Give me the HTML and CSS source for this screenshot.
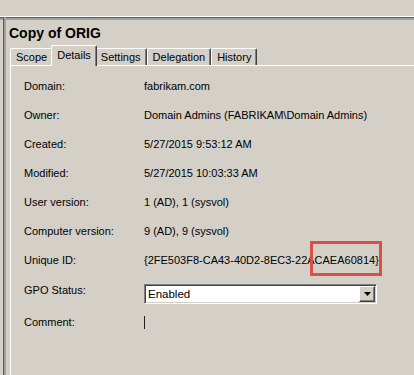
FILE: index.html
```html
<!DOCTYPE html>
<html lang="en">
<head>
    <meta charset="UTF-8">
    <title>Copy of ORIG</title>
    <link rel="stylesheet" href="styles.css">
</head>
<body>
    <div class="band"></div>
    <div class="window">
        <h1 class="title">Copy of ORIG</h1>

        <div class="tabs">
            <div class="tab">Scope</div>
            <div class="tab active">Details</div>
            <div class="tab">Settings</div>
            <div class="tab">Delegation</div>
            <div class="tab">History</div>
        </div>

        <div class="panel">
            <div class="row"><span class="label">Domain:</span><span class="value">fabrikam.com</span></div>
            <div class="row"><span class="label">Owner:</span><span class="value">Domain Admins (FABRIKAM\Domain Admins)</span></div>
            <div class="row"><span class="label">Created:</span><span class="value">5/27/2015 9:53:12 AM</span></div>
            <div class="row"><span class="label">Modified:</span><span class="value">5/27/2015 10:03:33 AM</span></div>
            <div class="row"><span class="label">User version:</span><span class="value">1 (AD), 1 (sysvol)</span></div>
            <div class="row"><span class="label">Computer version:</span><span class="value">9 (AD), 9 (sysvol)</span></div>
            <div class="row"><span class="label">Unique ID:</span><span class="value">{2FE503F8-CA43-40D2-8EC3-22ACAEA60814}</span></div>

            <div class="row status">
                <span class="label">GPO Status:</span>
                <div class="select">
                    <span class="select-text">Enabled</span>
                    <span class="select-btn">
                        <svg width="7" height="4" viewBox="0 0 7 4"><path d="M0 0h7L3.5 4z" fill="#000"/></svg>
                    </span>
                </div>
            </div>

            <div class="row comment">
                <span class="label">Comment:</span>
                <span class="caret"></span>
            </div>

            <!-- annotation box around the end of the ID -->
            <div class="highlight"></div>
        </div>
    </div>
</body>
</html>
```

FILE: styles.css
```css
html, body {
    margin: 0;
    padding: 0;
}
body {
    width: 414px;
    height: 375px;
    overflow: hidden;
    background: #d4d0c8;
    font-family: "Liberation Sans", Arial, sans-serif;
    font-size: 11px;
    color: #000;
}
.band {
    height: 16px;
    border-bottom: 1px solid #fff;
    box-shadow: 0 1px 0 #5a5a5a, 0 3px 0 #a0a0a0;
}
.window {
    display: flex;
    flex-direction: column;
    box-sizing: border-box;
    height: 358px;
    margin-left: 3px;
    padding: 8px 0 0 5px;
    border-left: 1px solid #5a5a5a;
    box-shadow: inset 2px 0 0 #a0a0a0;
}
.title {
    margin: 0;
    font-size: 14px;
    line-height: 16px;
    font-weight: bold;
}
.tabs {
    display: flex;
    align-items: flex-end;
    margin: 3px 0 0 1px;
    height: 21px;
}
.tab {
    position: relative;
    display: flex;
    align-items: center;
    box-sizing: border-box;
    height: 17px;
    padding: 0 5px 0 5px;
    border-top: 1px solid #fff;
    border-left: 1px solid #fff;
    border-right: 1px solid #404040;
    border-radius: 2px 2px 0 0;
    box-shadow: inset -1px 0 0 #808080;
    background: #d4d0c8;
}
.tab.active {
    z-index: 1;
    height: 21px;
    margin: 0 -2px -1px -2px;
    padding-bottom: 3px;
}
.panel {
    position: relative;
    flex: 1;
    margin-left: 1px;
    padding: 5px 0 0 13px;
    border-top: 1px solid #fff;
    border-left: 1px solid #fff;
}
.row {
    display: flex;
    align-items: center;
    height: 29px;
}
.label {
    width: 120px;
    flex-shrink: 0;
}
.value {
    white-space: nowrap;
}
.row.status {
    align-items: flex-start;
    height: 20px;
    margin-top: 10px;
    line-height: 13px;
}
.select {
    display: flex;
    align-items: center;
    justify-content: space-between;
    box-sizing: border-box;
    width: 233px;
    height: 20px;
    border: 1px solid;
    border-color: #808080 #fff #fff #808080;
    box-shadow: inset 1px 1px 0 #404040, inset -1px -1px 0 #d4d0c8;
    background: #fff;
}
.select-text {
    padding-left: 3px;
    font-size: 11.5px;
}
.select-btn {
    display: flex;
    align-items: center;
    justify-content: center;
    box-sizing: border-box;
    width: 16px;
    height: 16px;
    margin-right: 1px;
    background: #d4d0c8;
    border: 1px solid;
    border-color: #fff #404040 #404040 #fff;
    box-shadow: inset -1px -1px 0 #808080;
}
.row.comment {
    align-items: flex-start;
    height: 13px;
    margin-top: 12px;
    line-height: 13px;
}
.caret {
    width: 1px;
    height: 13px;
    background: #222;
}
.highlight {
    position: absolute;
    left: 299px;
    top: 175px;
    box-sizing: border-box;
    width: 72px;
    height: 35px;
    border: 3px solid #dc4f47;
}
```
